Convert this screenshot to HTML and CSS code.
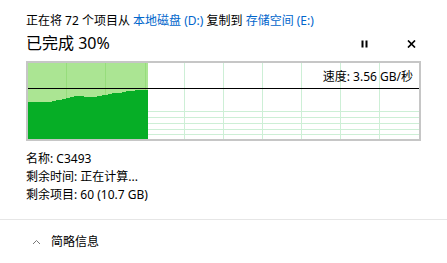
FILE: index.html
```html
<!DOCTYPE html>
<html lang="zh-CN">
<head>
<meta charset="utf-8">
<title>复制进度</title>
<link rel="stylesheet" href="styles.css">
</head>
<body>
<div class="dialog">
  <div class="main">
    <div class="header">正在将 72 个项目从 <span class="link">本地磁盘 (D:)</span> 复制到 <span class="link">存储空间 (E:)</span></div>
    <div class="title-row">
      <div class="title">已完成 30%</div>
      <div class="controls">
        <svg class="icon pause" width="8" height="8" viewBox="0 0 8 8"><rect x="0.5" y="0.5" width="2" height="7" fill="#000"/><rect x="4.5" y="0.5" width="2" height="7" fill="#000"/></svg>
        <svg class="icon close" width="9" height="8" viewBox="0 0 9 8"><path d="M1 0.5 L8 7.5 M8 0.5 L1 7.5" stroke="#000" stroke-width="1.7" fill="none"/></svg>
      </div>
    </div>
    <div class="graph">
      <svg class="chart" width="391" height="76" viewBox="0 0 391 76">
        <rect x="0" y="0" width="120" height="76" fill="#abe593"/>
        <g stroke="#cdefd6" stroke-width="1">
          <line x1="120" y1="48.5" x2="391" y2="48.5"/>
          <line x1="120" y1="54.5" x2="391" y2="54.5"/>
          <line x1="120" y1="60.5" x2="391" y2="60.5"/>
          <line x1="120" y1="66.5" x2="391" y2="66.5"/>
          <line x1="120" y1="71.5" x2="391" y2="71.5"/>
          <line x1="156.5" y1="0" x2="156.5" y2="76"/>
          <line x1="195.5" y1="0" x2="195.5" y2="76"/>
          <line x1="234.5" y1="0" x2="234.5" y2="76"/>
          <line x1="273.5" y1="0" x2="273.5" y2="76"/>
          <line x1="312.5" y1="0" x2="312.5" y2="76"/>
          <line x1="351.5" y1="0" x2="351.5" y2="76"/>
        </g>
        <g stroke="#97dd7c" stroke-width="1">
          <line x1="38.5" y1="0" x2="38.5" y2="76"/>
          <line x1="77.5" y1="0" x2="77.5" y2="76"/>
          <line x1="117.5" y1="0" x2="117.5" y2="76"/>
        </g>
        <polygon fill="#06ae26" points="0,39 24,39 24,38 28,38 28,37 34,37 34,36 38,36 38,35 42,35 42,34 46,34 46,33 56,33 56,34 69,34 69,33 74,33 74,32 80,32 80,31 84,31 84,30 94,30 94,29 98,29 98,28 107,28 107,27 120,27 120,76 0,76"/>
        <rect x="0" y="25" width="391" height="1" fill="#000"/>
      </svg>
      <span class="speed">速度: 3.56 GB/秒</span>
    </div>
    <div class="details">
      <div class="line">名称: C3493</div>
      <div class="line">剩余时间: 正在计算...</div>
      <div class="line">剩余项目: 60 (10.7 GB)</div>
    </div>
  </div>
  <div class="footer">
    <svg class="chevron" width="9" height="6" viewBox="0 0 9 6"><polyline points="1,5 4.5,1.5 8,5" fill="none" stroke="#777" stroke-width="1"/></svg>
    <span class="more">简略信息</span>
  </div>
</div>
</body>
</html>
```

FILE: styles.css
```css
html, body {
  margin: 0;
  padding: 0;
  background: #ffffff;
}
body {
  font-family: "Noto Sans", "Noto Sans CJK SC", "Liberation Sans", sans-serif;
  color: #000;
  width: 447px;
  height: 263px;
  overflow: hidden;
}
.dialog {
  width: 447px;
}
.main {
  padding: 12px 0 0 26px;
}
.header {
  font-size: 12px;
  line-height: 18px;
  white-space: nowrap;
}
.link {
  color: #0066cc;
}
.title-row {
  display: flex;
  align-items: center;
  justify-content: space-between;
  width: 395px;
  margin-top: 2px;
  height: 22px;
}
.title {
  font-size: 16px;
  line-height: 22px;
}
.controls {
  display: flex;
  align-items: center;
  gap: 38px;
  padding-right: 5px;
  padding-top: 1px;
}
.icon {
  display: block;
}
.graph {
  position: relative;
  margin-top: 7px;
  width: 391px;
  height: 76px;
  border: 2px solid #c6c6c6;
}
.chart {
  display: block;
}
.speed {
  position: absolute;
  top: 5px;
  right: 6px;
  font-size: 12px;
  line-height: 18px;
  white-space: nowrap;
}
.details {
  margin-top: 9px;
  font-size: 12px;
}
.line {
  line-height: 18px;
}
.footer {
  margin-top: 15px;
  border-top: 1px solid #e6e6e6;
  height: 43px;
  display: flex;
  align-items: center;
  padding-left: 32px;
  gap: 10px;
}
.chevron {
  display: block;
}
.more {
  font-size: 12px;
  line-height: 18px;
}
```
